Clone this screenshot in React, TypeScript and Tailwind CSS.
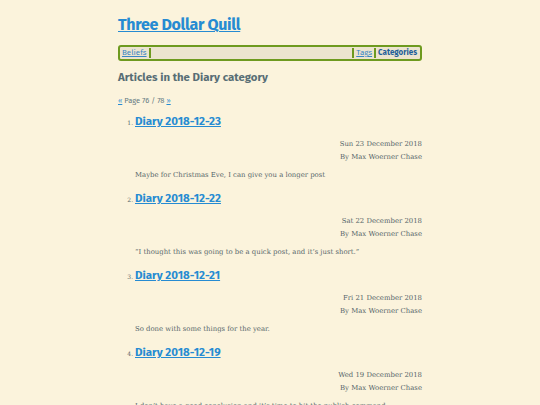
const posts = [
  {
    title: "Diary 2018-12-23",
    date: "Sun 23 December 2018",
    summary: "Maybe for Christmas Eve, I can give you a longer post",
  },
  {
    title: "Diary 2018-12-22",
    date: "Sat 22 December 2018",
    summary: "\u201cI thought this was going to be a quick post, and it\u2019s just short.\u201d",
  },
  {
    title: "Diary 2018-12-21",
    date: "Fri 21 December 2018",
    summary: "So done with some things for the year.",
  },
  {
    title: "Diary 2018-12-19",
    date: "Wed 19 December 2018",
    summary: "I don\u2019t have a good conclusion and it\u2019s time to hit the publish command.",
  },
];

const sans = "font-['Fira_Sans','Open_Sans','Noto_Sans',sans-serif]";

export default function App() {
  return (
    <div className="min-h-[405px] h-[405px] overflow-hidden bg-[#fbf3dc] text-[#56666a] font-['DejaVu_Serif',serif]">
      <div className="mx-auto w-[304px] pt-[14px]">
        <a
          href="#"
          className={`${sans} block text-[16px] leading-[22px] font-bold text-[#268bd2] underline tracking-[-0.3px]`}
        >
          Three Dollar Quill
        </a>

        <nav
          className={`${sans} mt-[9px] flex items-center h-[16px] rounded-[3px] border-2 border-[#6e9a1f] bg-[#ece4cf] text-[8px] leading-none px-[1px]`}
        >
          <a href="#" className="text-[#3a86c4] underline px-[1px]">
            Beliefs
          </a>
          <span className="w-[2px] h-[10px] bg-[#6e9a1f] ml-[1px]" />
          <span className="flex-1" />
          <span className="w-[2px] h-[10px] bg-[#6e9a1f]" />
          <a href="#" className="text-[#3a86c4] underline px-[2px]">
            Tags
          </a>
          <span className="w-[2px] h-[10px] bg-[#6e9a1f]" />
          <a href="#" className="text-[#1f5f99] font-bold px-[2px]">
            Categories
          </a>
        </nav>

        <h1 className={`${sans} mt-[8px] text-[11.4px] leading-[16px] font-bold text-[#586e75]`}>
          Articles in the Diary category
        </h1>

        <p className={`${sans} mt-[11px] text-[7.5px] leading-[10px] text-[#657b83]`}>
          <a href="#" className="text-[#268bd2] underline">«</a> Page 76 / 78{" "}
          <a href="#" className="text-[#268bd2] underline">»</a>
        </p>

        <ol className="mt-[2px] pl-[17px] list-decimal marker:text-[6px] marker:text-[#56666a]">
          {posts.map((p) => (
            <li key={p.title} className="h-[77px]">
              <a
                href="#"
                className={`${sans} text-[11.5px] leading-[18px] font-bold text-[#268bd2] underline`}
              >
                {p.title}
              </a>
              <div className="mt-[6px] text-right text-[6.9px] leading-[12.5px]">
                <div>{p.date}</div>
                <div>By Max Woerner Chase</div>
              </div>
              <p className="mt-[7px] text-[6.9px] leading-[10px]">
                {p.summary}
              </p>
            </li>
          ))}
        </ol>
      </div>
    </div>
  );
}
